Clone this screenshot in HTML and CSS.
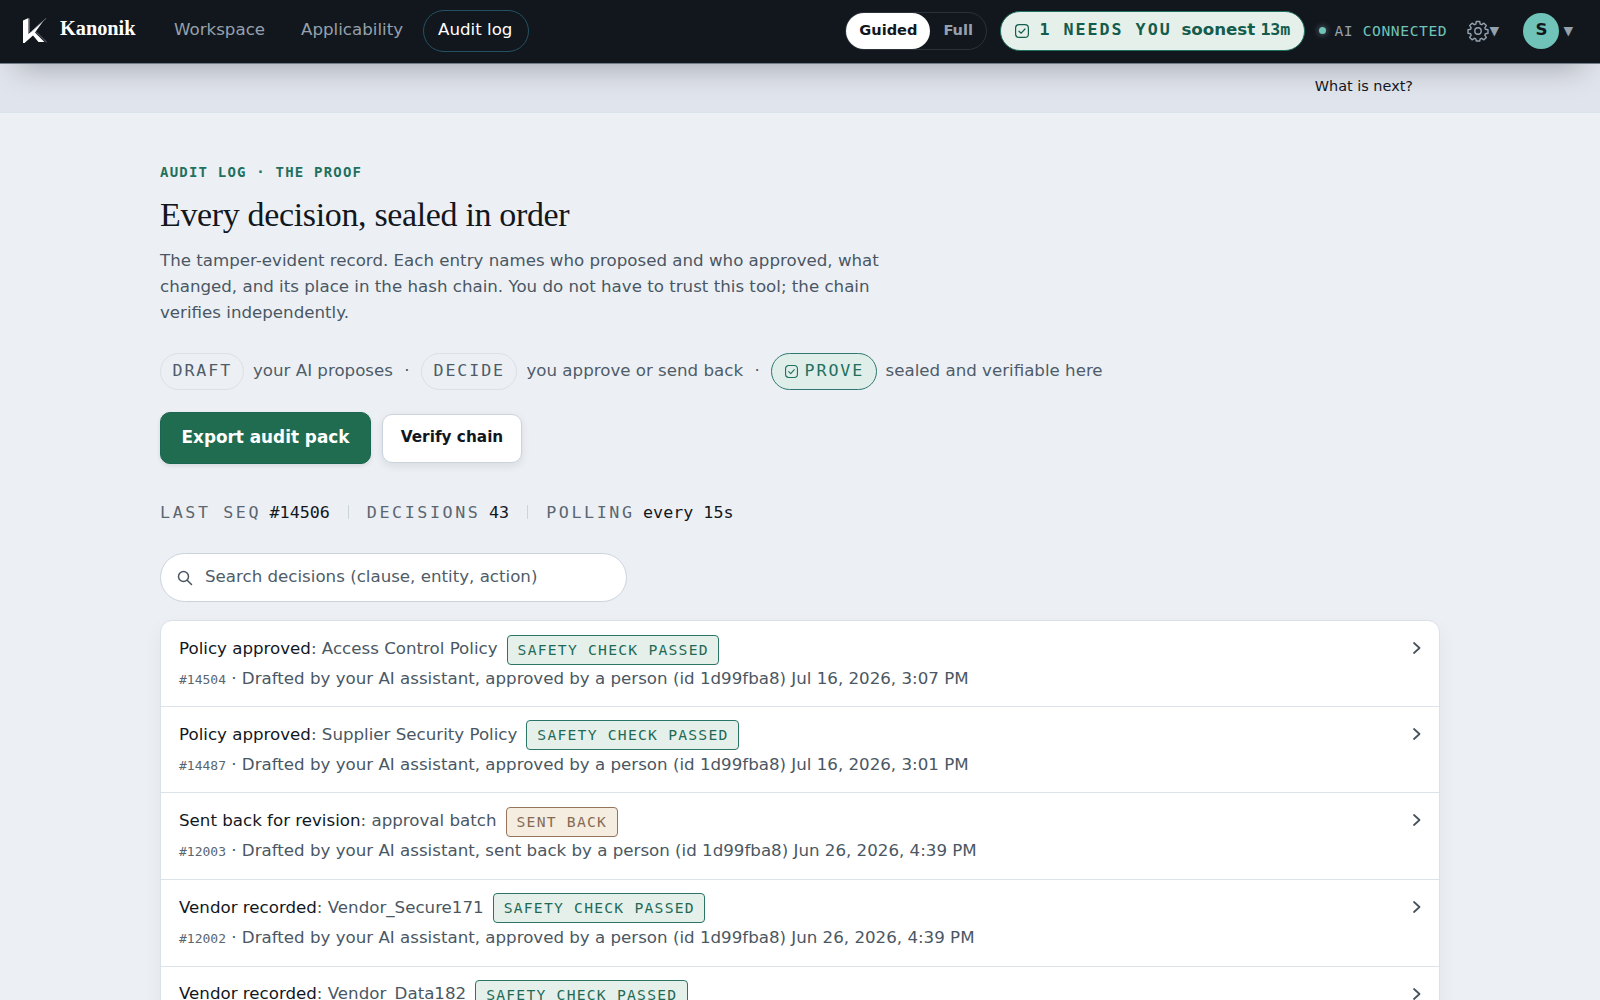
FILE: index.html
```html
<!DOCTYPE html>
<html lang="en">
<head>
<meta charset="utf-8">
<title>Kanonik – Audit log</title>
<link rel="stylesheet" href="styles.css">
</head>
<body>
<header class="topbar">
  <div class="brand">
    <svg class="logo" viewBox="0 0 24 25"><path fill="#fff" d="M0 2.500 5.500 0V16L21 2 12 14.500 21.500 24H15.500L10 17.500 1.500 25H0z"/><path stroke="#7e858e" stroke-width=".8" fill="none" d="M6.300 1V14M8 14 23 .4M13.300 14 23.500 24"/></svg>
    <span class="brand-name">Kanonik</span>
  </div>
  <nav class="nav">
    <a class="nav-link">Workspace</a>
    <a class="nav-link">Applicability</a>
    <a class="nav-link current">Audit log</a>
  </nav>
  <div class="mode"><span class="mode-on">Guided</span><span class="mode-off">Full</span></div>
  <div class="needs">
    <svg class="check" viewBox="0 0 14 14"><rect x=".6" y=".6" width="12.800" height="12.800" rx="3.500"/><path d="M4 7.200 6.200 9.200 10 5"/></svg>
    <span class="needs-count">1 NEEDS YOU</span><span class="needs-soon">soonest</span><span class="needs-time">13m</span>
  </div>
  <div class="ai"><i class="dot"></i><span>AI</span><span class="ai-state">CONNECTED</span></div>
  <div class="settings">
    <svg class="gear" viewBox="0 0 22 22"><circle cx="11" cy="11" r="3.200"/><path d="M9.300 1.500h3.400l.5 2.600 1.500.6 2.200-1.500 2.400 2.400-1.500 2.200.6 1.500 2.600.5v3.400l-2.600.5-.6 1.500 1.500 2.200-2.400 2.400-2.200-1.500-1.500.6-.5 2.100H9.300l-.5-2.100-1.500-.6-2.200 1.500-2.400-2.400 1.500-2.200-.6-1.500-2.600-.5V9.800l2.600-.5.6-1.500-1.500-2.200 2.400-2.400 2.200 1.500 1.500-.6z"/></svg>
    <span class="caret">▼</span>
  </div>
  <div class="user"><span class="avatar">S</span><span class="caret">▼</span></div>
</header>
<div class="strip"><span>What is next?</span></div>
<main class="page">
  <div class="eyebrow">AUDIT LOG · THE PROOF</div>
  <h1 class="title">Every decision, sealed in order</h1>
  <p class="lead">The tamper-evident record. Each entry names who proposed and who approved, what changed, and its place in the hash chain. You do not have to trust this tool; the chain verifies independently.</p>
  <div class="steps">
    <span class="step draft">DRAFT</span><span class="step-text">your AI proposes</span><span class="sep">·</span>
    <span class="step decide">DECIDE</span><span class="step-text">you approve or send back</span><span class="sep">·</span>
    <span class="step prove"><svg class="check" viewBox="0 0 14 14"><rect x=".6" y=".6" width="12.800" height="12.800" rx="3.500"/><path d="M4 7.200 6.200 9.200 10 5"/></svg>PROVE</span><span class="step-text">sealed and verifiable here</span>
  </div>
  <div class="actions"><button class="btn primary">Export audit pack</button><button class="btn secondary">Verify chain</button></div>
  <div class="stats">
    <span class="stat">LAST SEQ <b>#14506</b></span><i class="bar"></i><span class="stat">DECISIONS <b>43</b></span><i class="bar"></i><span class="stat">POLLING <b>every 15s</b></span>
  </div>
  <div class="search"><svg class="lens" viewBox="0 0 16 16"><circle cx="6.500" cy="6.500" r="5"/><path d="M10.200 10.200 14.500 14.500"/></svg><span>Search decisions (clause, entity, action)</span></div>
  <section class="list">
    <article class="row">
      <div class="line"><span class="what"><b>Policy approved</b>: Access Control Policy</span><span class="badge">SAFETY CHECK PASSED</span></div>
      <div class="meta"><span class="id">#14504</span> · Drafted by your AI assistant, approved by a person (id 1d99fba8) Jul 16, 2026, 3:07 PM</div>
      <svg class="chev" viewBox="0 0 8 12"><path d="M1 1 6.500 6 1 11"/></svg>
    </article>
    <article class="row">
      <div class="line"><span class="what"><b>Policy approved</b>: Supplier Security Policy</span><span class="badge">SAFETY CHECK PASSED</span></div>
      <div class="meta"><span class="id">#14487</span> · Drafted by your AI assistant, approved by a person (id 1d99fba8) Jul 16, 2026, 3:01 PM</div>
      <svg class="chev" viewBox="0 0 8 12"><path d="M1 1 6.500 6 1 11"/></svg>
    </article>
    <article class="row">
      <div class="line"><span class="what"><b>Sent back for revision</b>: approval batch</span><span class="badge sent">SENT BACK</span></div>
      <div class="meta"><span class="id">#12003</span> · Drafted by your AI assistant, sent back by a person (id 1d99fba8) Jun 26, 2026, 4:39 PM</div>
      <svg class="chev" viewBox="0 0 8 12"><path d="M1 1 6.500 6 1 11"/></svg>
    </article>
    <article class="row">
      <div class="line"><span class="what"><b>Vendor recorded</b>: Vendor_Secure171</span><span class="badge">SAFETY CHECK PASSED</span></div>
      <div class="meta"><span class="id">#12002</span> · Drafted by your AI assistant, approved by a person (id 1d99fba8) Jun 26, 2026, 4:39 PM</div>
      <svg class="chev" viewBox="0 0 8 12"><path d="M1 1 6.500 6 1 11"/></svg>
    </article>
    <article class="row">
      <div class="line"><span class="what"><b>Vendor recorded</b>: Vendor_Data182</span><span class="badge">SAFETY CHECK PASSED</span></div>
      <svg class="chev" viewBox="0 0 8 12"><path d="M1 1 6.500 6 1 11"/></svg>
    </article>
  </section>
</main>
</body>
</html>
```
FILE: styles.css
```css
* { box-sizing: border-box; }
html, body { height: 1000px; overflow: hidden; }
body { margin: 0; background: #ecf0f5; color: #12171e; font: 16.670px/26px "DejaVu Sans", sans-serif; white-space: nowrap; }
svg { display: block; flex: none; fill: none; stroke-linecap: round; stroke-linejoin: round; }
.logo { stroke: none; }

.topbar { position: relative; z-index: 1; display: flex; align-items: center; height: 64px; padding: 0 27px 2px 23px; background: #12171e; border-bottom: 1px solid #6f7d88; box-shadow: 0 20px 30px -18px rgba(18, 23, 30, .34); }
.brand { display: flex; align-items: center; gap: 13px; width: 136px; }
.logo { width: 24px; height: 25px; }
.brand-name { font: bold 20.300px/24px "Liberation Serif", serif; color: #fff; margin-top: -5px; }
.nav { display: flex; align-items: center; gap: 4px; margin-left: -1px; }
.nav-link { height: 42px; padding: 0 15px; line-height: 38px; color: #95a1ad; border: 1px solid transparent; border-radius: 21px; }
.nav-link.current { width: 106px; padding: 0 0 0 14px; color: #fff; border-color: #225262; }
.mode { display: flex; width: 142px; height: 38px; margin-left: auto; border: 1px solid #2b313a; border-radius: 19px; font-weight: bold; font-size: 14.600px; line-height: 33px; }
.mode-on { width: 84px; text-align: center; color: #12171e; background: #fff; border-radius: 18px; }
.mode-off { width: 56px; padding-left: 13px; color: #95a1ad; }
.needs { display: flex; align-items: center; width: 305px; height: 40px; margin-left: 13px; padding-left: 14px; color: #145c4c; background: #e6f0ea; border: 1px solid #1f705e; border-radius: 20px; font-weight: bold; line-height: 34px; padding-bottom: 2px; }
.check { width: 14px; height: 14px; stroke: currentColor; stroke-width: 1.200; }
.needs .check { margin: 3px 10px 0 0; }
.needs-count { font-family: "DejaVu Sans Mono", monospace; letter-spacing: 2px; width: 142px; }
.needs-soon { width: 79px; }
.needs-time { font-family: "DejaVu Sans Mono", monospace; letter-spacing: -.1px; }
.ai { display: flex; align-items: center; width: 137px; margin-left: 14px; color: #95a1ad; font: 14.700px/20px "DejaVu Sans Mono", monospace; letter-spacing: .55px; }
.dot { width: 7px; height: 7px; margin-right: 8px; border-radius: 50%; background: #6fc3b8; box-shadow: 0 0 5px 2px #3b424b; }
.ai-state { color: #6fc3b8; margin-left: 9.500px; }
.settings { display: flex; align-items: center; width: 48px; margin-left: 11px; color: #95a1ad; }
.gear { width: 22px; height: 22px; stroke: currentColor; stroke-width: 1.400; }
.caret { font-size: 12.500px; line-height: 20px; margin-left: 1px; color: #95a1ad; }
.settings .caret { margin-left: 0; }
.user { display: flex; align-items: center; margin-left: 8px; }
.avatar { width: 36px; height: 36px; border-radius: 50%; background: #6fc3b8; color: #12171e; font-weight: bold; text-align: center; line-height: 34px; }
.user .caret { margin-left: 4px; }

.strip { height: 49px; padding: 9px 187px 0 0; text-align: right; background: #e0e4ec; border-bottom: 1px solid #dae2ea; font-size: 14.450px; }

.page { padding: 46px 160px 0; }
.eyebrow { height: 26px; color: #1f705e; font: bold 14px/26px "DejaVu Sans Mono", monospace; letter-spacing: 1.200px; }
.title { margin: 9px 0 0; height: 42px; font: 400 34px/42px "Liberation Serif", serif; letter-spacing: -.35px; }
.lead { margin: 12px 0 0; width: 740px; color: #4a5763; white-space: normal; }
.steps { display: flex; align-items: center; margin-top: 27px; height: 37px; color: #4f5c68; line-height: 36px; }
.step { display: flex; align-items: center; height: 37px; padding: 0 0 2px 11.500px; border: 1px solid #dbe0e6; border-radius: 19px; font-family: "DejaVu Sans Mono", monospace; letter-spacing: 1.900px; }
.draft { width: 84px; }
.decide { width: 96.500px; }
.prove { width: 105.500px; color: #1f705e; border-color: #2f786f; background: #e0eeea; }
.prove .check { width: 13px; height: 13px; margin: 2px 7px 0 1px; }
.step-text { height: 37px; margin-left: 9px; }
.sep { width: 28px; height: 37px; text-align: center; }
.actions { display: flex; align-items: center; gap: 11px; height: 53px; margin-top: 22px; }
.btn { margin: 0; padding: 0 0 2px; font: bold 16.850px "DejaVu Sans", sans-serif; border-radius: 10px; }
.primary { width: 211px; height: 52px; margin-top: -1px; color: #fff; background: #206c50; border: 1px solid #1b6650; box-shadow: 0 2px 4px rgba(18, 23, 30, .1); }
.secondary { width: 140px; height: 49px; font-size: 15.300px; color: #12171e; background: #fff; border: 1px solid #cbd3dc; box-shadow: 0 3px 8px rgba(18, 23, 30, .09); padding-bottom: 4px; }
.stats { display: flex; align-items: center; margin-top: 34px; height: 26px; color: #5a6670; font-size: 16.720px; font-family: "DejaVu Sans Mono", monospace; }
.stat { display: flex; gap: 8.500px; letter-spacing: 2.570px; }
.stat b { color: #12171e; font-weight: 400; letter-spacing: 0; }
.bar { width: 1px; height: 14px; margin: 0 18px; background: #ccd4dc; }
.search { display: flex; align-items: center; gap: 12px; width: 467px; height: 49px; margin-top: 28px; padding: 0 0 2px 16px; color: #4f5c68; background: #fff; border: 1px solid #cbd3dd; border-radius: 25px; }
.lens { width: 16px; height: 16px; margin-top: 3px; stroke: #4a5763; stroke-width: 1.500; }
.list { margin-top: 18px; background: #fff; border: 1px solid #dbe1e9; border-radius: 12px 12px 0 0; box-shadow: 0 8px 20px rgba(18, 23, 30, .05); }
.row { display: grid; grid-template-columns: 1fr 8px; align-content: start; height: 86.600px; padding: 13px 18px 0; border-bottom: 1px solid #dbe2ea; color: #4a5763; }
.row:first-child { height: 85.800px; }
.line { display: flex; align-items: center; gap: 9px; height: 31px; }
.what { margin-top: -1.500px; }
.what b { color: #12171e; font-weight: 400; }
.badge { height: 30px; padding: 0 9.500px 0 10px; color: #1f6a56; background: #e6f0ea; border: 1px solid #2a7565; border-radius: 4px; font: 14.700px/28px "DejaVu Sans Mono", monospace; letter-spacing: 1.220px; }
.badge.sent { color: #876a54; background: #f4ede0; border-color: #94755c; }
.meta { grid-row: 2; padding-top: 1px; }
.id { font: 13px/20px "DejaVu Sans Mono", monospace; color: #5a6670; }
.chev { width: 8px; height: 12px; margin-top: 8px; stroke: #45515d; stroke-width: 1.700; }
```
